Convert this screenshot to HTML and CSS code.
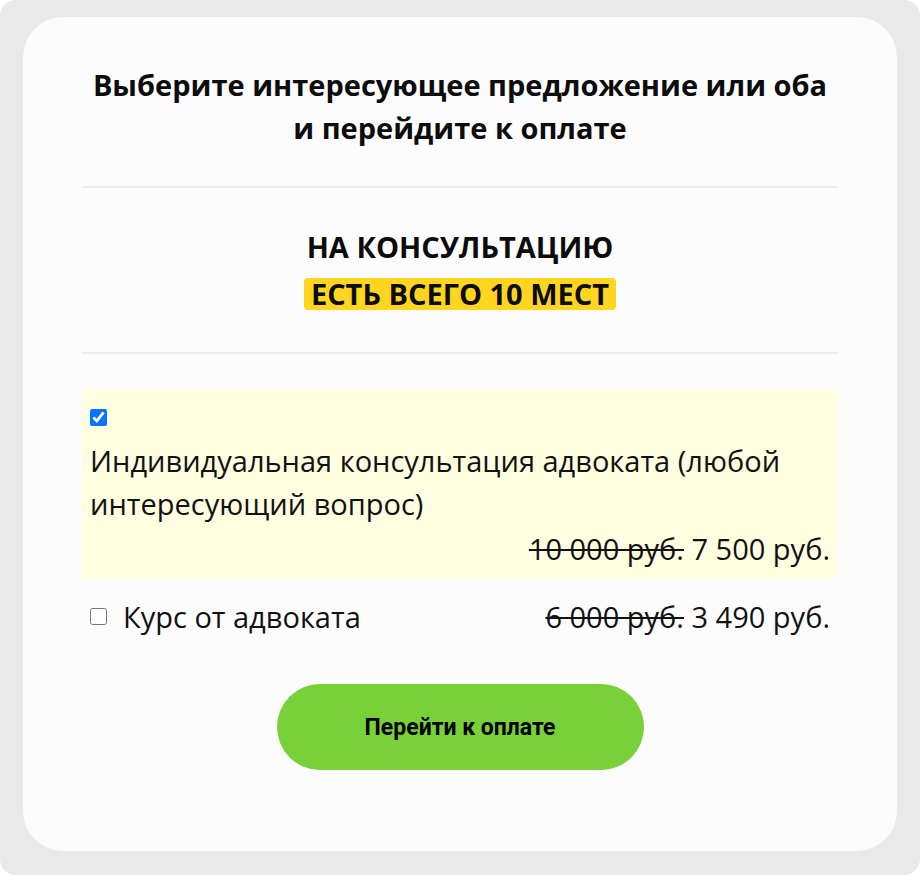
FILE: index.html
```html
<!DOCTYPE html>
<html lang="ru">
<head>
  <meta charset="UTF-8" />
  <title>Выбор предложения</title>
  <link rel="stylesheet" href="styles.css">
</head>
<body>

  <div class="wrap">
    <div class="card">
      <h2 class="title">Выберите интересующее предложение или оба<br>и перейдите к оплате</h2>

      <hr class="divider" />

      <h3 class="subtitle">
        <span class="subtitle-line">НА КОНСУЛЬТАЦИЮ</span>
        <span class="mark">ЕСТЬ ВСЕГО 10 МЕСТ</span>
      </h3>

      <hr class="divider divider-last" />

      <label class="offer offer-active">
        <span class="offer-check"><input type="checkbox" checked /></span>
        <span class="offer-name">Индивидуальная консультация адвоката (любой интересующий вопрос)</span>
        <span class="offer-price"><s>10 000 руб.</s> 7 500 руб.</span>
      </label>

      <label class="offer offer-row">
        <span class="offer-left">
          <input type="checkbox" />
          <span class="offer-name">Курс от адвоката</span>
        </span>
        <span class="offer-price"><s>6 000 руб.</s> 3 490 руб.</span>
      </label>

      <div class="actions">
        <button class="pay-btn">Перейти к оплате</button>
      </div>
    </div>
  </div>

</body>
</html>
```

FILE: styles.css
```css
* {
  box-sizing: border-box;
}

html, body {
  margin: 0;
  background: #ffffff;
}

body {
  font-family: 'Open Sans', 'Noto Sans', sans-serif;
  color: #111;
}

.wrap {
  height: 875px;
  background: #e9e9e9;
  border-radius: 16px;
  padding: 17px 23px 24px;
}

.card {
  height: 100%;
  background: #fdfcfd;
  border-radius: 40px;
  padding: 46px 59px 0;
}

.title {
  margin: 0;
  font-size: 29px;
  font-weight: 700;
  line-height: 43px;
  text-align: center;
  color: #0c0c0c;
}

.divider {
  border: none;
  height: 2px;
  background: #eeedee;
  margin: 37px 0 36px;
}

.divider-last {
  margin: 35px 0 35px;
}

/* two centered lines, second one on a yellow marker */
.subtitle {
  margin: 0;
  display: flex;
  flex-direction: column;
  align-items: center;
  font-size: 29px;
  font-weight: 700;
  color: #0c0c0c;
}

.subtitle-line {
  line-height: 46px;
}

.mark {
  margin: 8px 0 7px;
  line-height: 32px;
  background: #ffd51f;
  border-radius: 4px;
  padding: 0 7px;
}

.offer {
  display: block;
  font-size: 29px;
  line-height: 43px;
  cursor: pointer;
}

.offer input[type="checkbox"] {
  width: 17px;
  height: 17px;
  margin: 0;
  vertical-align: middle;
}

.offer-active {
  background: #fffee0;
  padding: 7px 8px 9px;
}

.offer-check {
  display: flex;
  align-items: center;
  height: 43px;
}

.offer-name {
  display: block;
}

.offer-active .offer-price {
  display: block;
  margin-top: 2px;
  text-align: right;
}

.offer-row {
  display: flex;
  justify-content: space-between;
  align-items: center;
  padding: 0 8px;
  margin-top: 16px;
}

.offer-left {
  display: flex;
  align-items: center;
  gap: 16px;
}

.offer-price s {
  text-decoration-thickness: 2px;
}

.actions {
  display: flex;
  justify-content: center;
  margin-top: 46px;
}

.pay-btn {
  width: 367px;
  height: 86px;
  border: none;
  border-radius: 43px;
  background: #79d13a;
  color: #000;
  font-family: Roboto, sans-serif;
  font-weight: 700;
  font-size: 23px;
  cursor: pointer;
}

.pay-btn:hover {
  background: #6cc22f;
}
```
